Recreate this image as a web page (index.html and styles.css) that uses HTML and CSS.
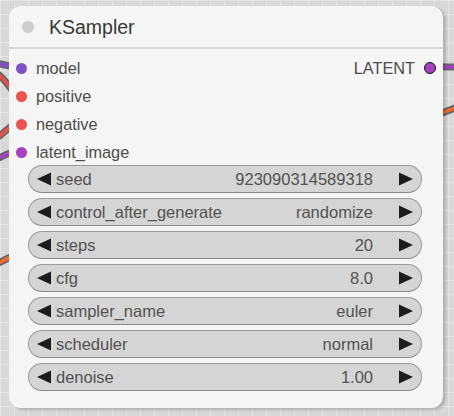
FILE: index.html
```html
<!DOCTYPE html>
<html>
<head>
<meta charset="utf-8">
<link rel="stylesheet" href="styles.css">
</head>
<body>
<div class="canvas">
  <svg class="wires" width="454" height="416" viewBox="0 0 454 416">
    <g class="outline">
      <path d="M-6 63 C4 64 10 67 20 67"/>
      <path d="M-6 72 C6 76 10 94 20 95"/>
      <path d="M-6 140 C4 134 10 124 20 123"/>
      <path d="M-6 160 C4 156 10 151 20 151"/>
      <path d="M-6 265 C4 261 12 255 22 252"/>
      <path d="M430 67 L460 67"/>
      <path d="M436 115 C446 112 452 109 460 106"/>
    </g>
    <path class="w purple" d="M-6 63 C4 64 10 67 20 67"/>
    <path class="w red" d="M-6 72 C6 76 10 94 20 95"/>
    <path class="w red" d="M-6 140 C4 134 10 124 20 123"/>
    <path class="w violet" d="M-6 160 C4 156 10 151 20 151"/>
    <path class="w orange" d="M-6 265 C4 261 12 255 22 252"/>
    <path class="w violet" d="M430 67 L460 67"/>
    <path class="w orange" d="M436 115 C446 112 452 109 460 106"/>
  </svg>
  <div class="node">
    <div class="title">
      <span class="title-dot"></span>
      <span class="title-text">KSampler</span>
    </div>
    <div class="body">
      <div class="slots">
        <div class="inputs">
          <div class="slot"><span class="dot c-model"></span><span>model</span></div>
          <div class="slot"><span class="dot c-cond"></span><span>positive</span></div>
          <div class="slot"><span class="dot c-cond"></span><span>negative</span></div>
          <div class="slot"><span class="dot c-latent"></span><span>latent_image</span></div>
        </div>
        <div class="outputs">
          <div class="slot out"><span>LATENT</span><span class="dot c-latent ring"></span></div>
        </div>
      </div>
      <div class="widgets">
        <div class="pill"><svg class="arr" viewBox="0 0 14 14"><polygon points="0,7 14,0.5 14,13.5"/></svg><span class="label">seed</span><span class="value">923090314589318</span><svg class="arr" viewBox="0 0 14 14"><polygon points="14,7 0,0.5 0,13.5"/></svg></div>
        <div class="pill"><svg class="arr" viewBox="0 0 14 14"><polygon points="0,7 14,0.5 14,13.5"/></svg><span class="label">control_after_generate</span><span class="value">randomize</span><svg class="arr" viewBox="0 0 14 14"><polygon points="14,7 0,0.5 0,13.5"/></svg></div>
        <div class="pill"><svg class="arr" viewBox="0 0 14 14"><polygon points="0,7 14,0.5 14,13.5"/></svg><span class="label">steps</span><span class="value">20</span><svg class="arr" viewBox="0 0 14 14"><polygon points="14,7 0,0.5 0,13.5"/></svg></div>
        <div class="pill"><svg class="arr" viewBox="0 0 14 14"><polygon points="0,7 14,0.5 14,13.5"/></svg><span class="label">cfg</span><span class="value">8.0</span><svg class="arr" viewBox="0 0 14 14"><polygon points="14,7 0,0.5 0,13.5"/></svg></div>
        <div class="pill"><svg class="arr" viewBox="0 0 14 14"><polygon points="0,7 14,0.5 14,13.5"/></svg><span class="label">sampler_name</span><span class="value">euler</span><svg class="arr" viewBox="0 0 14 14"><polygon points="14,7 0,0.5 0,13.5"/></svg></div>
        <div class="pill"><svg class="arr" viewBox="0 0 14 14"><polygon points="0,7 14,0.5 14,13.5"/></svg><span class="label">scheduler</span><span class="value">normal</span><svg class="arr" viewBox="0 0 14 14"><polygon points="14,7 0,0.5 0,13.5"/></svg></div>
        <div class="pill"><svg class="arr" viewBox="0 0 14 14"><polygon points="0,7 14,0.5 14,13.5"/></svg><span class="label">denoise</span><span class="value">1.00</span><svg class="arr" viewBox="0 0 14 14"><polygon points="14,7 0,0.5 0,13.5"/></svg></div>
      </div>
    </div>
  </div>
</div>
</body>
</html>
```

FILE: styles.css
```css
html, body {
  margin: 0;
  padding: 0;
}
body {
  width: 454px;
  height: 416px;
  overflow: hidden;
  font-family: "Liberation Sans", Arial, sans-serif;
  background-color: #d8d8d8;
  background-image:
    linear-gradient(to right, rgba(255,255,255,0.28) 1px, transparent 1px),
    linear-gradient(to bottom, rgba(255,255,255,0.28) 1px, transparent 1px);
  background-size: 14px 14px;
}
.canvas {
  position: relative;
  width: 454px;
  height: 416px;
  padding: 6px 0 0 9px;
  box-sizing: border-box;
}
.wires {
  position: absolute;
  left: 0;
  top: 0;
}
.wires path {
  fill: none;
}
.outline path {
  stroke: #666;
  stroke-width: 7;
}
.w { stroke-width: 3.5; }
.purple { stroke: #7f50c8; }
.red { stroke: #ea4f4c; }
.violet { stroke: #a542c2; }
.orange { stroke: #f26b2f; }

.node {
  position: relative;
  z-index: 1;
  width: 434px;
  height: 402px;
  background: #f5f5f5;
  border-radius: 12px;
  box-shadow: 3px 2px 3px rgba(0,0,0,0.18);
  display: flex;
  flex-direction: column;
}
.title {
  height: 41px;
  border-bottom: 2px solid #d8d8d8;
  display: flex;
  align-items: center;
  padding-left: 13px;
  flex: none;
}
.title-dot {
  width: 12px;
  height: 12px;
  border-radius: 50%;
  background: #cdcdcd;
}
.title-text {
  margin-left: 15px;
  margin-top: 2px;
  font-size: 19.5px;
  color: #383838;
}
.body {
  padding-top: 5px;
}
.slots {
  display: flex;
  justify-content: space-between;
}
.slot {
  height: 28px;
  display: flex;
  align-items: center;
  font-size: 16.3px;
  color: #4d4d4d;
}
.inputs .slot {
  padding-left: 7px;
}
.inputs .slot .dot {
  margin-right: 9px;
}
.out {
  padding-right: 7px;
}
.out .dot {
  margin-left: 9px;
}
.dot {
  width: 11px;
  height: 11px;
  border-radius: 50%;
  display: inline-block;
  box-sizing: border-box;
}
.c-model { background: #7f53c6; }
.c-cond { background: #ea5350; }
.c-latent { background: #a641c0; }
.ring {
  width: 12px;
  height: 12px;
  border: 1.5px solid #111;
}
.widgets {
  display: flex;
  flex-direction: column;
  gap: 5px;
  margin: -1px 21px 0 19px;
}
.pill {
  height: 28px;
  box-sizing: border-box;
  border: 1px solid #9a9a9a;
  border-bottom-color: #8a8a8a;
  border-radius: 14px;
  background: #d5d5d5;
  display: flex;
  align-items: center;
  padding: 0 8px;
  font-size: 16.5px;
  color: #525252;
}
.arr {
  width: 14px;
  height: 14px;
  flex: none;
}
.arr polygon {
  fill: #1c1c1c;
}
.label {
  margin-left: 5px;
}
.value {
  margin-left: auto;
  margin-right: 26px;
}
```
